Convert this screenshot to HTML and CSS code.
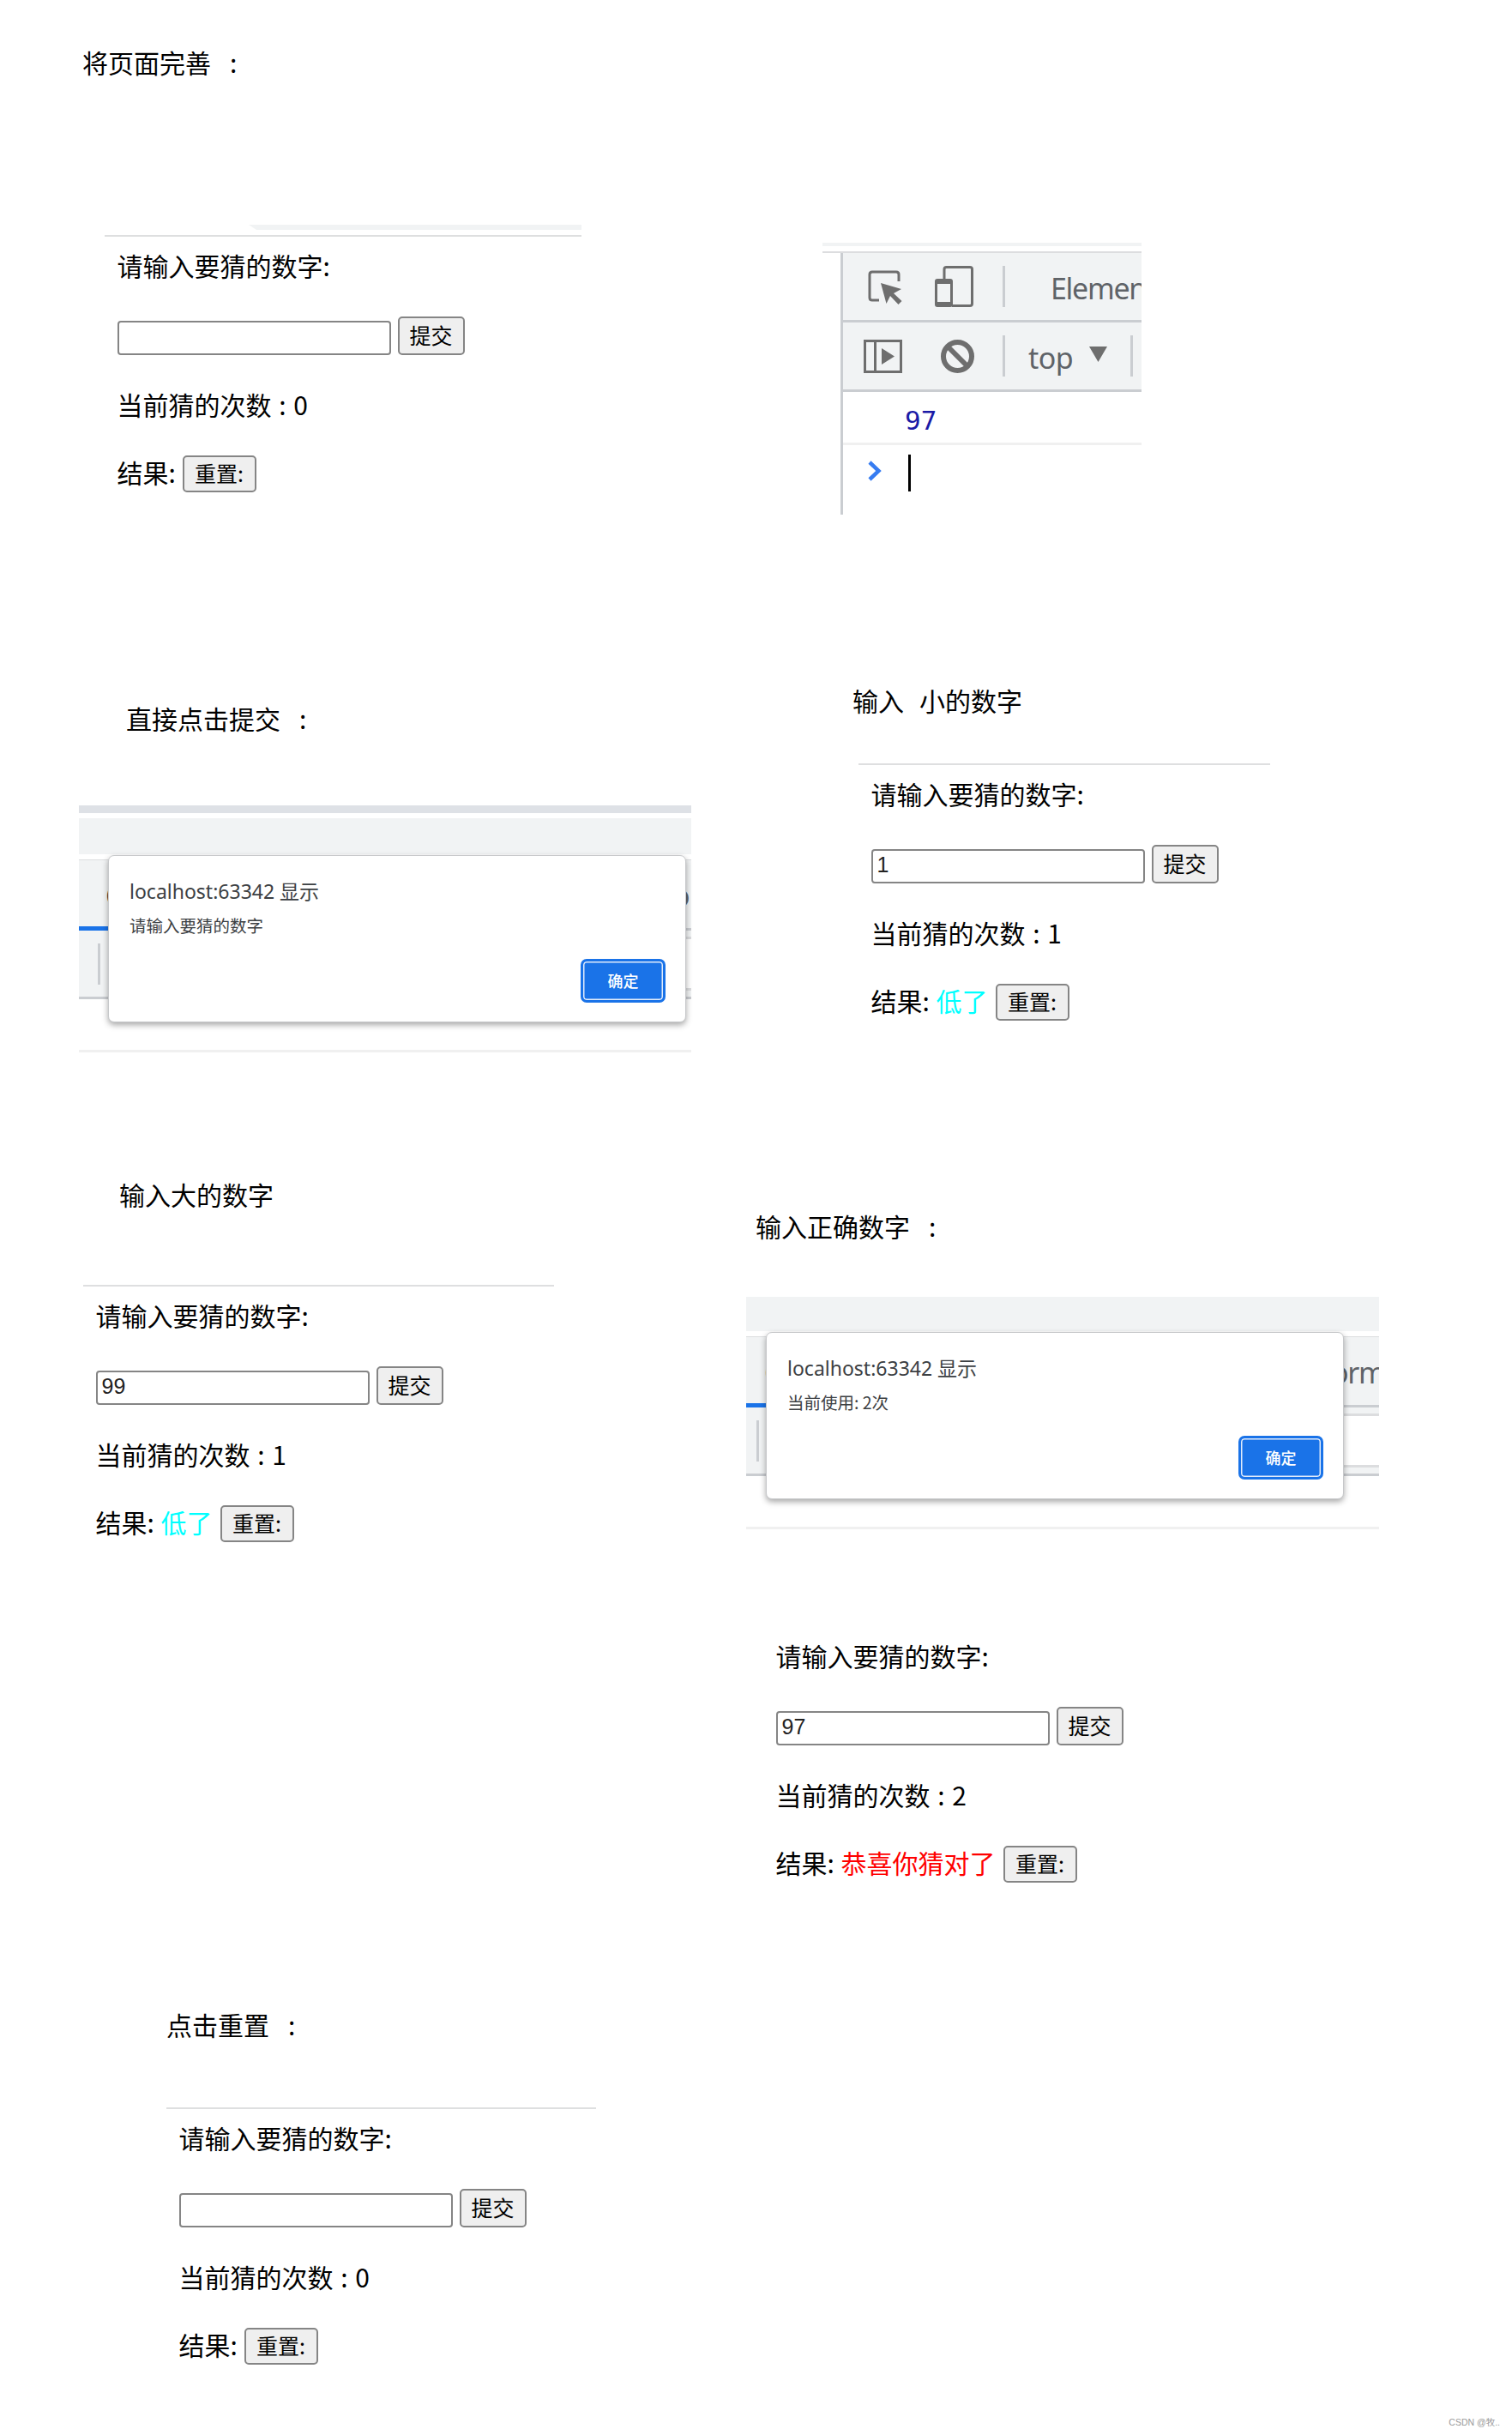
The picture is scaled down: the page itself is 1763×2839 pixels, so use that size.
FILE: index.html
```
<!DOCTYPE html>
<html lang="zh-CN">
<head>
  <meta charset="UTF-8">
  <title>猜数字</title>
  <link rel="stylesheet" href="styles.css">
</head>
<body>

<div class="page">
  <div class="column left">
    <h2 class="title title-page">将页面完善<span class="colon">:</span></h2>

    <div class="form-shot shot-start">
      <div class="tab-edge"></div>
      <div class="game">
        <div class="row label-row">请输入要猜的数字:</div>
        <div class="row input-row"><input type="text"><button>提交</button></div>
        <div class="row count-row">当前猜的次数 : 0</div>
        <div class="row result-row"><span class="label">结果:</span><button>重置:</button></div>
      </div>
    </div>

    <h2 class="title title-empty">直接点击提交<span class="colon">:</span></h2>

    <div class="alert-shot shot-empty">
      <div class="window-edge"></div>
      <div class="address-bar"></div>
      <div class="tabs"><span class="tab-active">C</span><span class="tab">o</span></div>
      <div class="toolbar"><i></i><div class="field"></div></div>
      <div class="console-line"></div>
      <div class="dialog">
        <p class="host">localhost:63342 显示</p>
        <p class="message">请输入要猜的数字</p>
        <button class="ok">确定</button>
      </div>
    </div>

    <h2 class="title title-big">输入大的数字</h2>

    <div class="form-shot shot-big">
      <div class="game">
        <div class="row label-row">请输入要猜的数字:</div>
        <div class="row input-row"><input type="text" value="99"><button>提交</button></div>
        <div class="row count-row">当前猜的次数 : 1</div>
        <div class="row result-row"><span class="label">结果:</span><span class="result low">低了</span><button>重置:</button></div>
      </div>
    </div>

    <h2 class="title title-reset">点击重置<span class="colon">:</span></h2>

    <div class="form-shot shot-reset">
      <div class="game">
        <div class="row label-row">请输入要猜的数字:</div>
        <div class="row input-row"><input type="text"><button>提交</button></div>
        <div class="row count-row">当前猜的次数 : 0</div>
        <div class="row result-row"><span class="label">结果:</span><button>重置:</button></div>
      </div>
    </div>
  </div>

  <div class="column right">
    <div class="devtools">
      <div class="devtools-top"></div>
      <div class="panel">
        <div class="panel-row">
          <svg class="icon-inspect" width="40" height="40" viewBox="0 0 40 40">
            <path d="M13 35H5q-3 0-3-3V5q0-3 3-3h28q3 0 3 3v8" fill="none" stroke="#6e6e6e" stroke-width="3"/>
            <path d="M15 15l24 7-9 5 9.500 9-4 4-9.500-10-4.500 9z" fill="#6e6e6e"/>
          </svg>
          <svg class="icon-device" width="46" height="48" viewBox="0 0 46 48">
            <path d="M11 15V4q0-2.500 2.500-2.500H41q2.500 0 2.500 2.500v40q0 2.500-2.500 2.500H20" fill="none" stroke="#6e6e6e" stroke-width="3"/>
            <path fill-rule="evenodd" d="M3 15h15q3 0 3 3v27q0 3-3 3H3q-3 0-3-3V18q0-3 3-3zM3 21v21h15V21z" fill="#6e6e6e"/>
          </svg>
          <i class="sep"></i>
          <span class="elements">Elemen</span>
        </div>
        <div class="panel-row">
          <svg class="icon-sidebar" width="45" height="39" viewBox="0 0 45 39">
            <path d="M1.500 1.500h42v36h-42zM13.500 1.500v36" fill="none" stroke="#6e6e6e" stroke-width="3"/>
            <path d="M21 10l15 9.500L21 29z" fill="#6e6e6e"/>
          </svg>
          <svg class="icon-clear" width="39" height="39" viewBox="0 0 39 39">
            <circle cx="19.500" cy="19.500" r="16.500" fill="none" stroke="#6e6e6e" stroke-width="6"/>
            <path d="M8 8l23 23" stroke="#6e6e6e" stroke-width="6"/>
          </svg>
          <i class="sep"></i>
          <span class="context">top</span>
          <svg class="icon-arrow" width="21" height="18" viewBox="0 0 21 18"><path d="M0 0h21L10.500 18z" fill="#6e6e6e"/></svg>
          <i class="sep sep-last"></i>
        </div>
        <div class="log">97</div>
        <div class="prompt">
          <svg width="16" height="24" viewBox="0 0 16 24"><path d="M2 2l10.500 10L2 22" fill="none" stroke="#367cf1" stroke-width="4.500"/></svg>
          <i class="cursor"></i>
        </div>
      </div>
    </div>

    <h2 class="title title-small">输入<span class="rest">小的数字</span></h2>

    <div class="form-shot shot-small">
      <div class="game">
        <div class="row label-row">请输入要猜的数字:</div>
        <div class="row input-row"><input type="text" value="1"><button>提交</button></div>
        <div class="row count-row">当前猜的次数 : 1</div>
        <div class="row result-row"><span class="label">结果:</span><span class="result low">低了</span><button>重置:</button></div>
      </div>
    </div>

    <h2 class="title title-right">输入正确数字<span class="colon">:</span></h2>

    <div class="alert-shot shot-win">
      <div class="address-bar"></div>
      <div class="tabs"><span class="tab-active">C</span><span class="tab">orm</span></div>
      <div class="toolbar"><i></i><div class="field"></div></div>
      <div class="console-line"></div>
      <div class="dialog">
        <p class="host">localhost:63342 显示</p>
        <p class="message">当前使用: 2次</p>
        <button class="ok">确定</button>
      </div>
    </div>

    <div class="form-shot shot-correct">
      <div class="game">
        <div class="row label-row">请输入要猜的数字:</div>
        <div class="row input-row"><input type="text" value="97"><button>提交</button></div>
        <div class="row count-row">当前猜的次数 : 2</div>
        <div class="row result-row"><span class="label">结果:</span><span class="result correct">恭喜你猜对了</span><button>重置:</button></div>
      </div>
    </div>
  </div>
</div>

<footer>CSDN @牧..</footer>

</body>
</html>
```

FILE: styles.css
```
* {
  box-sizing: border-box;
}

body {
  margin: 0;
  background-color: #fff;
  color: #000;
  font-family: "Noto Sans CJK SC", sans-serif;
}

.page {
  display: flex;
  height: 2815px;
}

.column {
  display: flex;
  flex-direction: column;
  align-items: flex-start;
}

.left {
  width: 860px;
}

.right {
  flex: 1;
}

/* Step titles */
.title {
  margin: 0;
  height: 40px;
  line-height: 35px;
  font-size: 30px;
  font-weight: normal;
  white-space: nowrap;
}

.colon {
  margin-left: 22px;
}

.rest {
  margin-left: 18px;
}

.title-page {
  margin: 55px 0 0 96px;
}

.title-empty {
  margin: 246px 0 0 147px;
}

.title-big {
  margin: 148px 0 0 139px;
}

.title-reset {
  margin: 545px 0 0 194px;
}

.title-small {
  margin: 199px 0 0 134px;
}

.title-right {
  margin: 222px 0 0 21px;
}

/* Guess form */
.shot-start {
  margin: 167px 0 0 122px;
  width: 556px;
}

.shot-big {
  margin: 83px 0 0 97px;
  width: 549px;
}

.shot-reset {
  margin: 74px 0 0 194px;
  width: 501px;
}

.shot-small {
  margin: 51px 0 0 141px;
  width: 480px;
}

.shot-correct {
  margin: 112px 0 0 30px;
  width: 480px;
}

.tab-edge {
  height: 6px;
  margin: 0 0 6px 168px;
  background-color: #f1f3f4;
  clip-path: polygon(0 0, 100% 0, 100% 100%, 9px 100%);
}

.game {
  height: 300px;
  padding-left: 14.5px;
  border-top: 2px solid #dedfe0;
}

.shot-correct .game {
  border-color: transparent;
}

.row {
  display: flex;
  align-items: center;
  font-size: 30px;
  line-height: 40px;
  white-space: pre;
}

.label-row {
  height: 40px;
  margin-top: 13px;
}

.input-row {
  height: 45px;
  margin-top: 40px;
  align-items: flex-end;
}

.count-row {
  height: 40px;
  margin-top: 37px;
  word-spacing: 2px;
}

.result-row {
  height: 43px;
  margin-top: 40px;
}

.label,
.result {
  margin-top: -6px;
}

.label {
  width: 76px;
}

.result {
  margin-right: 9px;
}

.low {
  color: #00ffff;
}

.correct {
  color: #ff0000;
}

.game input {
  width: 319px;
  height: 40px;
  margin: 0 8px 0 0;
  padding: 0 5px 3px;
  border: 2px solid #858585;
  border-radius: 4px;
  font: 25px "Liberation Sans", Arial, sans-serif;
  color: #222;
}

.game button {
  height: 45px;
  width: 78px;
  padding: 0 0 3px;
  border: 2px solid #858585;
  border-radius: 5px;
  background-color: #efefef;
  color: #000;
  font: 25px "Noto Sans CJK SC", sans-serif;
}

.result-row button {
  height: 43px;
  width: 86px;
}

/* Devtools */
.devtools {
  margin: 283px 0 0 99px;
  width: 372px;
}

.devtools-top {
  height: 12px;
  border-top: 4px solid #f1f3f4;
  border-bottom: 2px solid #dcdddf;
}

.panel {
  margin-left: 21px;
  height: 305px;
  border-left: 3px solid #cacdd1;
  overflow: hidden;
}

.panel-row {
  display: flex;
  align-items: center;
  height: 81px;
  border-bottom: 3px solid #cacdd1;
  background-color: #f1f3f4;
  color: #5f6368;
  font: 34px/40px "Noto Sans", sans-serif;
}

.panel svg {
  flex: none;
}

.icon-inspect {
  margin: 2px 0 0 29px;
}

.icon-device {
  margin-left: 38px;
}

.sep {
  flex: none;
  width: 3px;
  height: 48px;
  margin-left: 33px;
  background-color: #cacdd1;
}

.elements {
  margin: 3px 0 0 53px;
  letter-spacing: -1.3px;
}

.icon-sidebar {
  margin-left: 24px;
}

.icon-clear {
  margin-left: 45px;
}

.context {
  margin: 3px 0 0 27px;
  letter-spacing: -0.5px;
}

.icon-arrow {
  margin: -4px 0 0 19px;
}

.sep-last {
  margin-left: 27px;
}

.log {
  height: 62px;
  padding-left: 72px;
  border-bottom: 3px solid #f0f0f0;
  color: #1a1aa6;
  font: 31px/66px "DejaVu Sans Mono", monospace;
}

.prompt {
  display: flex;
  align-items: center;
  padding: 11px 0 0 29px;
}

.prompt svg {
  margin-top: -5px;
}

.cursor {
  width: 3px;
  height: 43px;
  margin-left: 31px;
  background-color: #000;
}

/* Alert over the browser window */
.alert-shot {
  position: relative;
}

.shot-empty {
  margin: 79px 0 0 92px;
  width: 714px;
}

.shot-win {
  margin: 60px 0 0 10px;
  width: 738px;
}

.window-edge {
  height: 15px;
  border-top: 9px solid #dee1e6;
}

.address-bar {
  height: 46px;
  border-bottom: 6px solid #fff;
  background-color: #f1f3f4;
}

.shot-empty .address-bar {
  height: 48px;
}

.tabs {
  display: flex;
  align-items: center;
  height: 83px;
  padding: 3px 0 0 21px;
  border-top: 1px solid #dcdddf;
  border-bottom: 3px solid #cacdd1;
  background-color: #f1f3f4;
  color: #5f6368;
  font: 34px/40px "Noto Sans", sans-serif;
  letter-spacing: -1.3px;
  overflow-x: clip;
}

.shot-empty .tabs {
  padding-left: 31px;
}

.tab-active {
  position: relative;
  width: 661px;
  flex: none;
  color: #333;
}

/* Blue underline of the selected tab */
.tab-active::after {
  content: "";
  position: absolute;
  left: -32px;
  bottom: -21px;
  width: 200px;
  height: 5px;
  background-color: #1a73e8;
}

.toolbar {
  display: flex;
  height: 80px;
  padding: 7px 0 0 12px;
  border-bottom: 3px solid #cacdd1;
  background-color: #f1f3f4;
}

.shot-empty .toolbar {
  padding-left: 22px;
}

.toolbar i {
  width: 3px;
  height: 48px;
  margin-top: 8px;
  background-color: #cacdd1;
}

.field {
  flex: 1;
  height: 63px;
  margin-left: 200px;
  border: solid #dcdddf;
  border-width: 3px 0;
  background-color: #fff;
}

.console-line {
  height: 62px;
  border-bottom: 3px solid #f0f0f0;
}

.dialog {
  position: absolute;
  top: 41px;
  left: 23px;
  display: flex;
  flex-direction: column;
  width: 674px;
  height: 195px;
  padding: 25px 23px 0 24px;
  border: 1px solid #c6c8ca;
  border-radius: 7px;
  background-color: #fff;
  box-shadow: 0 3px 7px rgba(0, 0, 0, 0.35);
}

.shot-empty .dialog {
  top: 58px;
  left: 34px;
}

.dialog p {
  margin: 0;
  color: #3c4043;
}

.host {
  font: 23px/32px "Noto Sans", "Noto Sans CJK SC", sans-serif;
}

.dialog .message {
  margin-top: 9px;
  font-size: 19.5px;
  line-height: 30px;
}

.ok {
  align-self: flex-end;
  width: 99px;
  height: 51px;
  margin-top: 24px;
  padding: 0 0 1px;
  border: 3px solid #1a73e8;
  border-radius: 7px;
  background-color: #1a73e8;
  box-shadow: inset 0 0 0 1.5px #e0ebfb;
  color: #fff;
  font: 500 18px "Noto Sans CJK SC", sans-serif;
}

footer {
  height: 24px;
  padding-right: 14px;
  text-align: right;
  color: #999;
  font: 10.5px/19px "Liberation Sans", "Noto Sans CJK SC", sans-serif;
}
```
